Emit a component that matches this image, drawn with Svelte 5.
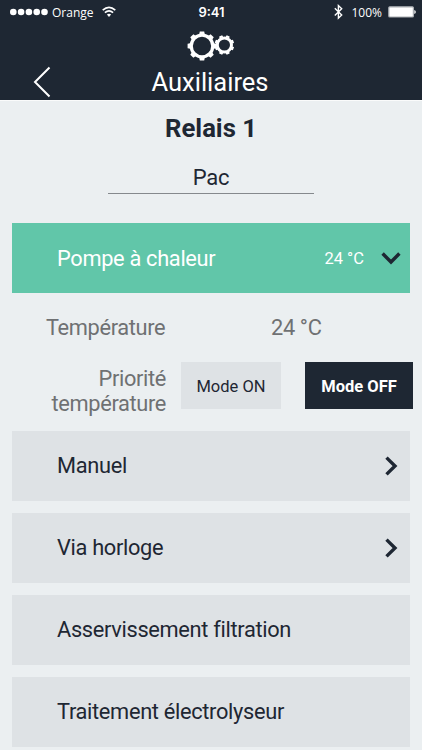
<script lang="ts">
	type Mode = { id: string; label: string; arrow: boolean };

	const modes: Mode[] = [
		{ id: 'manual', label: 'Manuel', arrow: true },
		{ id: 'clock', label: 'Via horloge', arrow: true },
		{ id: 'filtration', label: 'Asservissement filtration', arrow: false },
		{ id: 'electrolysis', label: 'Traitement électrolyseur', arrow: false }
	];

	const teeth = [0, 45, 90, 135, 180, 225, 270, 315];

	let priority = $state(false);
</script>

<div class="screen">
	<header>
		<div class="status">
			<div class="carrier">
				<svg width="38" height="8" viewBox="0 0 38 8" fill="#fff">
					{#each [0, 1, 2, 3, 4] as dot}
						<circle cx={3.3 + dot * 7.8} cy="4" r="3.3" />
					{/each}
				</svg>
				<span>Orange</span>
				<svg class="wifi" width="14" height="12" viewBox="0 0 14 12" fill="none" stroke="#fff" stroke-width="1.6">
					<path d="M.7 4.2Q7-1.5 13.3 4.2M2.9 6.7Q7 3 11.1 6.7" />
					<path d="M4.9 8.6Q7 6.8 9.1 8.6L7 10.9z" fill="#fff" stroke="none" />
				</svg>
			</div>
			<span class="time">9:41</span>
			<div class="power">
				<svg width="9" height="16" viewBox="0 0 9 16" fill="none" stroke="#fff" stroke-width="1.4">
					<path d="M.8 4.2L7.7 11 4.4 14.2V1.6L7.7 4.8.8 11.4" />
				</svg>
				<span class="percent">100%</span>
				<svg width="28" height="12" viewBox="0 0 28 12">
					<rect x=".8" y=".8" width="24.6" height="10.2" rx="1" fill="#fff" stroke="#a9adb2" stroke-width="1.2" />
					<path d="M26.3 4q1.5.4 1.5 2t-1.5 2z" fill="#fff" />
				</svg>
			</div>
		</div>

		<svg class="gears" width="48" height="30" viewBox="0 0 48 30" fill="none" stroke="#fff">
			<g transform="translate(15 15)">
				<circle r="10.8" stroke-width="3.3" />
				{#each teeth as angle}
					<path d="M-2.8-11.5L-2.2-14.4H2.2L2.8-11.5z" fill="#fff" stroke="none" transform="rotate({angle})" />
				{/each}
			</g>
			<g transform="translate(37.4 14)">
				<circle r="7.1" stroke-width="3" />
				{#each teeth as angle}
					<path d="M-2-7.8L-1.6-9.8H1.6L2-7.8z" fill="#fff" stroke="none" transform="rotate({angle + 22.5})" />
				{/each}
			</g>
		</svg>

		<div class="nav">
			<button class="back" aria-label="Retour">
				<svg width="18" height="32" viewBox="0 0 18 32" fill="none" stroke="#fff" stroke-width="2">
					<path d="M16.5 1.5L2 16l14.5 14.5" />
				</svg>
			</button>
			<h1>Auxiliaires</h1>
		</div>
	</header>

	<main>
		<h2>Relais 1</h2>
		<div class="name">Pac</div>

		<button class="row active">
			<span class="label">Pompe à chaleur</span>
			<span class="value">24 °C</span>
			<svg width="20" height="14" viewBox="0 0 20 14" fill="none" stroke="#1e2733" stroke-width="3.4">
				<path d="M1.6 2.5L10 11l8.4-8.5" />
			</svg>
		</button>

		<div class="temp">
			<span>Température</span>
			<span>24 °C</span>
		</div>

		<div class="priority">
			<span class="caption">Priorité température</span>
			<button class="mode on" class:selected={priority} onclick={() => (priority = true)}>Mode ON</button>
			<button class="mode off" class:selected={!priority} onclick={() => (priority = false)}>Mode OFF</button>
		</div>

		<div class="list">
			{#each modes as mode (mode.id)}
				<button class="row">
					<span class="label">{mode.label}</span>
					{#if mode.arrow}
						<svg class="arrow" width="14" height="20" viewBox="0 0 14 20" fill="none" stroke="#1e2733" stroke-width="3.4">
							<path d="M2.5 1.6L11 10l-8.5 8.4" />
						</svg>
					{/if}
				</button>
			{/each}
		</div>
	</main>
</div>

<style>
	.screen {
		width: 422px;
		height: 750px;
		overflow: hidden;
		background: #ebeff1;
		color: #1e2733;
		font-family: Roboto, sans-serif;
	}

	header {
		box-sizing: border-box;
		height: 101px;
		background: #1e2733;
		border-bottom: 1px solid #fafbfb;
		color: #fff;
	}

	button {
		border: 0;
		padding: 0;
		font: inherit;
		color: inherit;
		cursor: pointer;
	}

	svg {
		display: block;
		flex: none;
	}

	.status {
		display: grid;
		grid-template-columns: 1fr auto 1fr;
		align-items: center;
		height: 24px;
		padding: 0 6px 0 10px;
		font-family: 'Open Sans', sans-serif;
		font-size: 12px;
	}

	.carrier,
	.power {
		display: flex;
		align-items: center;
	}

	.carrier {
		gap: 4px;
	}

	.wifi {
		margin-left: 4px;
	}

	.time {
		margin-left: -3px;
		font-family: Inter, sans-serif;
		font-size: 13px;
		font-weight: 600;
	}

	.power {
		justify-content: flex-end;
	}

	.percent {
		margin: 0 6px 0 8px;
	}

	.gears {
		margin: 7px 0 0 187px;
	}

	.nav {
		display: grid;
		grid-template-columns: 60px 1fr 60px;
		align-items: center;
		height: 39px;
	}

	.back {
		background: none;
		padding: 2px 0 0 33px;
	}

	h1 {
		margin: 3px 2px 0 0;
		font-size: 25.5px;
		font-weight: 400;
		line-height: 36px;
		text-align: center;
	}

	main {
		padding: 0 12px;
	}

	h2 {
		margin: 11px 0 0;
		font-size: 25.7px;
		font-weight: 700;
		line-height: 32px;
		text-align: center;
	}

	.name {
		width: 206px;
		height: 31px;
		margin: 18px auto 29px;
		border-bottom: 1px solid #85898d;
		font-size: 22px;
		line-height: 32px;
		letter-spacing: -0.2px;
		text-align: center;
	}

	.row {
		display: flex;
		align-items: center;
		width: 398px;
		height: 70px;
		padding: 0 9px 0 45px;
		background: #dee2e5;
		font-size: 21.8px;
		letter-spacing: -0.32px;
		text-align: left;
	}

	.label {
		flex: 1;
	}

	.list .label {
		padding-bottom: 2px;
	}

	.active {
		background: #61c6a9;
		color: #fff;
	}

	.value {
		margin-right: 17px;
		font-size: 16.5px;
		letter-spacing: 0;
	}

	.arrow {
		margin-right: 3px;
	}

	.temp {
		display: flex;
		align-items: center;
		height: 69px;
		padding-left: 34px;
		color: #6f7173;
		font-size: 21.8px;
		letter-spacing: -0.35px;
	}

	.temp span:first-child {
		width: 225px;
	}

	.priority {
		display: flex;
		align-items: flex-start;
		height: 69px;
		margin-right: -3px;
	}

	.caption {
		width: 154px;
		margin: 5px 15px 0 0;
		color: #6f7173;
		font-size: 21.8px;
		line-height: 24.5px;
		letter-spacing: -0.35px;
		text-align: right;
	}

	.mode {
		height: 47px;
		padding-top: 1px;
		background: #dee2e5;
		font-size: 16.5px;
	}

	.on {
		width: 100px;
		margin-right: 24px;
	}

	.off {
		width: 108px;
	}

	.selected {
		background: #1e2733;
		color: #fff;
		font-weight: 700;
	}

	.list {
		display: flex;
		flex-direction: column;
		gap: 12px;
	}
</style>
